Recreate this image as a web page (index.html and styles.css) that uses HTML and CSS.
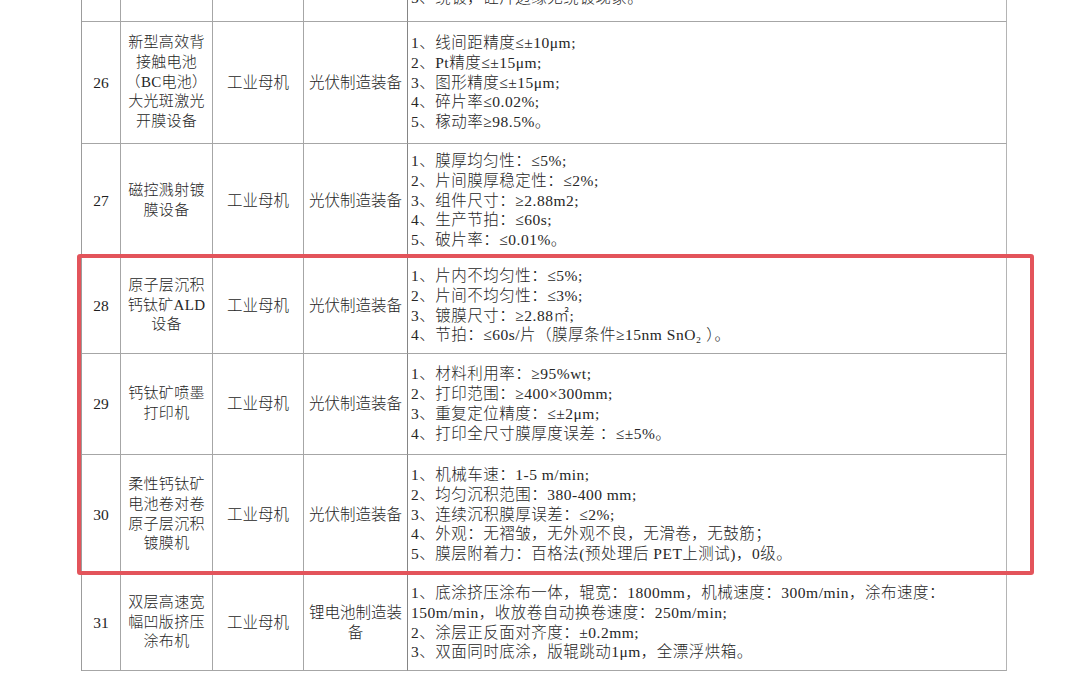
FILE: index.html
```html
<!DOCTYPE html>
<html lang="zh-CN">
<head>
<meta charset="utf-8">
<title>工业母机 设备参数表</title>
<link rel="stylesheet" href="styles.css">
</head>
<body>
<div class="page">
  <div class="sheet">
    <div class="c num"></div>
    <div class="c name"></div>
    <div class="c"></div>
    <div class="c"></div>
    <div class="c spec spec-end"><div>5、绕镀，硅片边缘无绕镀现象。</div></div>

    <div class="c num">26</div>
    <div class="c name">新型高效背<br>接触电池<br>（BC电池）<br>大光斑激光<br>开膜设备</div>
    <div class="c">工业母机</div>
    <div class="c">光伏制造装备</div>
    <div class="c spec">
      <div>1、线间距精度≤±10μm;</div>
      <div>2、Pt精度≤±15μm;</div>
      <div>3、图形精度≤±15μm;</div>
      <div>4、碎片率≤0.02%;</div>
      <div>5、稼动率≥98.5%。</div>
    </div>

    <div class="c num">27</div>
    <div class="c name">磁控溅射镀<br>膜设备</div>
    <div class="c">工业母机</div>
    <div class="c">光伏制造装备</div>
    <div class="c spec">
      <div>1、膜厚均匀性：≤5%;</div>
      <div>2、片间膜厚稳定性：≤2%;</div>
      <div>3、组件尺寸：≥2.88m2;</div>
      <div>4、生产节拍：≤60s;</div>
      <div>5、破片率：≤0.01%。</div>
    </div>

    <div class="c num">28</div>
    <div class="c name">原子层沉积<br>钙钛矿ALD<br>设备</div>
    <div class="c">工业母机</div>
    <div class="c">光伏制造装备</div>
    <div class="c spec">
      <div>1、片内不均匀性：≤5%;</div>
      <div>2、片间不均匀性：≤3%;</div>
      <div>3、镀膜尺寸：≥2.88㎡;</div>
      <div>4、节拍：≤60s/片（膜厚条件≥15nm SnO₂ ）。</div>
    </div>

    <div class="c num">29</div>
    <div class="c name">钙钛矿喷墨<br>打印机</div>
    <div class="c">工业母机</div>
    <div class="c">光伏制造装备</div>
    <div class="c spec">
      <div>1、材料利用率：≥95%wt;</div>
      <div>2、打印范围：≥400×300mm;</div>
      <div>3、重复定位精度：≤±2μm;</div>
      <div>4、打印全尺寸膜厚度误差 ：≤±5%。</div>
    </div>

    <div class="c num">30</div>
    <div class="c name">柔性钙钛矿<br>电池卷对卷<br>原子层沉积<br>镀膜机</div>
    <div class="c">工业母机</div>
    <div class="c">光伏制造装备</div>
    <div class="c spec">
      <div>1、机械车速：1-5 m/min;</div>
      <div>2、均匀沉积范围：380-400 mm;</div>
      <div>3、连续沉积膜厚误差：≤2%;</div>
      <div>4、外观：无褶皱，无外观不良，无滑卷，无鼓筋；</div>
      <div>5、膜层附着力：百格法(预处理后 PET上测试)，0级。</div>
    </div>

    <div class="c num">31</div>
    <div class="c name">双层高速宽<br>幅凹版挤压<br>涂布机</div>
    <div class="c">工业母机</div>
    <div class="c">锂电池制造装<br>备</div>
    <div class="c spec">
      <div>1、底涂挤压涂布一体，辊宽：1800mm，机械速度：300m/min，涂布速度：</div>
      <div>150m/min，收放卷自动换卷速度：250m/min;</div>
      <div>2、涂层正反面对齐度：±0.2mm;</div>
      <div>3、双面同时底涂，版辊跳动1μm，全漂浮烘箱。</div>
    </div>
  </div>
  <div class="highlight"></div>
</div>
</body>
</html>
```
FILE: styles.css
```css
html, body {
  margin: 0;
  padding: 0;
  background: #ffffff;
}

body {
  width: 1080px;
  height: 699px;
  overflow: hidden;
  font-family: "Liberation Serif", "Noto Sans CJK SC", serif;
  font-size: 15.5px;
  line-height: 19.8px;
  color: #262626;
}

.page {
  position: relative;
  display: flow-root;
  width: 1080px;
  height: 699px;
}

.sheet {
  display: grid;
  grid-template-columns: 39px 92px 91px 104px 599px;
  grid-template-rows: 62px 122px 114px 96px 101px 120px 96px;
  width: 925px;
  margin-left: 81px;
  margin-top: -40px;
  border-left: 1px solid #9c9c9c;
}

.c {
  box-sizing: border-box;
  border-right: 1px solid #a6a6a6;
  border-bottom: 1px solid #a6a6a6;
  display: flex;
  flex-direction: column;
  justify-content: center;
  align-items: center;
  text-align: center;
  font-weight: 300;
}

.c:nth-child(5n+4) {
  border-right-color: #858585;
}

.num {
  color: #1e1e1e;
  font-weight: 400;
}

.name {
  font-size: 15px;
  letter-spacing: 0.3px;
}

.spec {
  align-items: flex-start;
  text-align: left;
  padding-left: 3px;
  white-space: nowrap;
  letter-spacing: 0.5px;
  border-right-color: #b4b4b4;
}

.spec-end {
  justify-content: flex-end;
  padding-bottom: 13px;
}

.highlight {
  position: absolute;
  left: 77px;
  top: 254px;
  width: 957px;
  height: 321px;
  box-sizing: border-box;
  border: 4px solid #e3545b;
  border-radius: 3px;
}
```
